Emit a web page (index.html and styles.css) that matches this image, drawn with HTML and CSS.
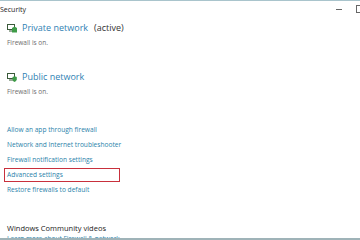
FILE: index.html
```html
<!DOCTYPE html>
<html lang="en">

<head>
    <meta charset="UTF-8">
    <title>Security</title>
    <link rel="stylesheet" href="styles.css">
</head>

<body>
    <!-- Window title bar -->
    <header class="titlebar">
        <span class="titlebar-title">Security</span>
        <div class="titlebar-buttons">
            <span class="btn-min"></span>
            <span class="btn-max"></span>
        </div>
    </header>

    <main class="content">
        <section class="network">
            <h2 class="network-title">
                <svg class="network-icon" width="10" height="9" viewBox="0 0 10 9">
                    <rect x="0.5" y="0.5" width="7" height="5" fill="none" stroke="#3a5a3a" />
                    <rect x="2" y="6.5" width="4" height="1" fill="#3a5a3a" />
                    <path d="M5 4 L7.5 2.5 L10 4 L10 8.5 L5 8.5 Z" fill="#3e9b48" />
                </svg>
                <span class="network-name">Private network</span>
                <span class="network-state">(active)</span>
            </h2>
            <p class="network-status">Firewall is on.</p>
        </section>

        <section class="network network-public">
            <h2 class="network-title">
                <svg class="network-icon" width="10" height="9" viewBox="0 0 10 9">
                    <rect x="0.5" y="0.5" width="7" height="5" fill="none" stroke="#3a5a3a" />
                    <rect x="2" y="6.5" width="4" height="1" fill="#3a5a3a" />
                    <path d="M5.5 4 L7.5 3.2 L9.8 4 L9.8 6.5 Q9.5 8.3 7.5 9 Q5.5 8.3 5.5 6.5 Z" fill="#3e9b48" />
                </svg>
                <span class="network-name">Public network</span>
            </h2>
            <p class="network-status">Firewall is on.</p>
        </section>

        <!-- Links to firewall settings -->
        <nav class="links">
            <a href="">Allow an app through firewall</a>
            <a href="">Network and Internet troubleshooter</a>
            <a href="">Firewall notification settings</a>
            <a href="" class="highlight">Advanced settings</a>
            <a href="">Restore firewalls to default</a>
        </nav>

        <section class="videos">
            <h3>Windows Community videos</h3>
            <a href="">Learn more about Firewall &amp; network</a>
        </section>
    </main>
</body>

</html>
```

FILE: styles.css
```css
body {
    margin: 0;
    height: 240px;
    overflow: hidden;
    font-family: "Open Sans", "Noto Sans", sans-serif;
    background-color: #fff;
    color: #222;
    border-top: 1px solid #a9c4cc;
    border-bottom: 2px solid #9fb3b8;
    box-sizing: border-box;
}

/* Title bar */
.titlebar {
    display: flex;
    justify-content: space-between;
    align-items: center;
    height: 16px;
}

.titlebar-title {
    font-size: 7px;
    color: #222;
}

.titlebar-buttons {
    display: flex;
    align-items: center;
    gap: 14px;
    margin-right: -3px;
}

.btn-min {
    width: 6px;
    border-top: 1px solid #666;
}

.btn-max {
    width: 6px;
    height: 6px;
    border: 1px solid #666;
    border-right: none;
}

/* Main content */
.content {
    padding-left: 7px;
}

.network {
    margin-top: 3px;
}

.network-public {
    margin-top: 21px;
}

.network-title {
    display: flex;
    align-items: center;
    margin: 0;
    font-weight: normal;
    font-size: 9px;
    line-height: 16px;
}

.network-icon {
    margin-right: 5px;
}

.network-name {
    color: #2f7fb3;
}

.network-state {
    margin-left: 6px;
    color: #333;
}

.network-status {
    margin: 2px 0 0 0;
    font-size: 6.5px;
    line-height: 10px;
    color: #6d6d6d;
}

/* Links */
.links {
    display: flex;
    flex-direction: column;
    align-items: flex-start;
    margin-top: 25px;
}

.links a {
    font-size: 6.6px;
    line-height: 15px;
    color: #2b83aa;
    text-decoration: none;
}

.links .highlight {
    box-sizing: border-box;
    width: 116px;
    height: 14px;
    margin: 1px 0 0 -3px;
    padding-left: 2px;
    line-height: 11px;
    border: 1.5px solid #c8303c;
}

.videos {
    margin-top: 25px;
}

.videos h3 {
    margin: 0;
    font-weight: normal;
    font-size: 7.5px;
    line-height: 12px;
    color: #222;
}

.videos a {
    display: block;
    font-size: 6.5px;
    line-height: 10px;
    color: #2b83aa;
    text-decoration: none;
}
```
